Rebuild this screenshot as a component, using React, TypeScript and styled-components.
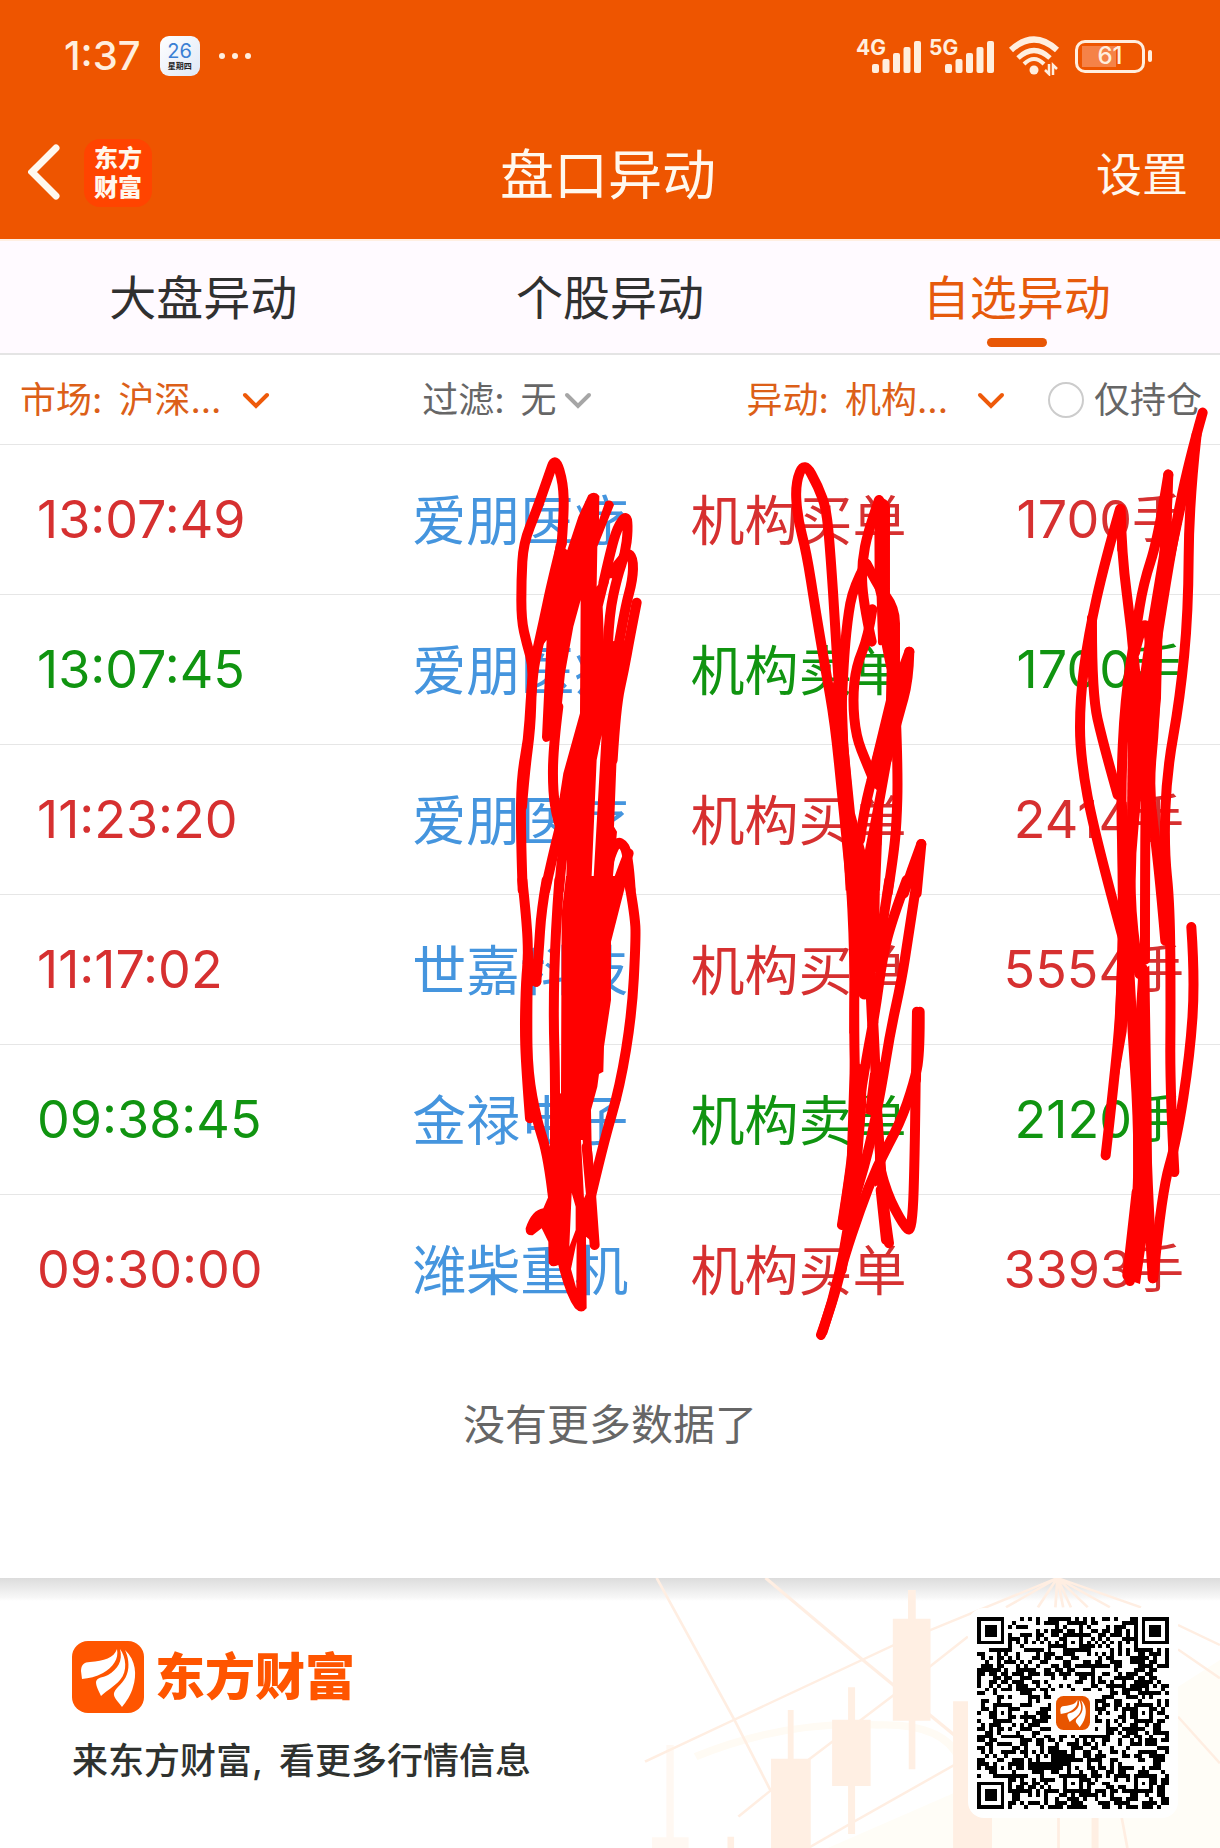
import React, { useState } from "react";
import styled, { createGlobalStyle } from "styled-components";

const GlobalStyle = createGlobalStyle`
  * { box-sizing: border-box; }
  body {
    margin: 0;
    background: #fff;
    font-family: Inter, "Noto Sans CJK SC", sans-serif;
    color: #303030;
  }
  button, select, input {
    font: inherit;
    color: inherit;
    margin: 0;
    padding: 0;
    border: 0;
    background: none;
  }
`;

const ORANGE = "#ee5500";
const CREAM = "#ffeede";

const Page = styled.div`
  position: relative;
  display: flex;
  flex-direction: column;
  min-height: 100vh;
`;

const Header = styled.header`
  background: ${ORANGE};
  color: #fff8ee;
`;

const StatusBar = styled.div`
  display: flex;
  align-items: center;
  justify-content: space-between;
  height: 112px;
  padding: 0 68px 0 64px;
  color: ${CREAM};
`;

const StatusGroup = styled.div<{ $gap: number }>`
  display: flex;
  align-items: center;
  gap: ${(p) => p.$gap}px;
`;

const Clock = styled.span`
  font-size: 40px;
  line-height: 48px;
  font-weight: 500;
`;

const Calendar = styled.span`
  display: flex;
  flex-direction: column;
  align-items: center;
  justify-content: center;
  width: 40px;
  height: 40px;
  border-radius: 9px;
  background: linear-gradient(135deg, #ffffff, #dfe8f6);
`;

const CalendarDay = styled.span`
  font-size: 20px;
  line-height: 20px;
  color: #3b7fd4;
`;

const CalendarWeek = styled.span`
  font-size: 8px;
  line-height: 10px;
  font-weight: 700;
  color: #222;
`;

const Signal = styled.span`
  display: flex;
  align-items: flex-start;
  height: 36px;
`;

const SignalLabel = styled.span`
  width: 16px;
  font-size: 21px;
  line-height: 20px;
  font-weight: 700;
  white-space: nowrap;
`;

const Battery = styled.span`
  display: flex;
  align-items: center;
  gap: 3px;
`;

const BatteryBody = styled.span`
  display: grid;
  place-items: center;
  width: 70px;
  height: 33px;
  border: 3px solid ${CREAM};
  border-radius: 10px;
  background: linear-gradient(90deg, #f58248 34px, transparent 34px) 4px 3px / 56px 21px no-repeat;
  font-size: 24px;
  line-height: 24px;
  font-weight: 500;
`;

const BatteryTip = styled.span`
  width: 4px;
  height: 12px;
  border-radius: 2px;
  background: ${CREAM};
`;

const NavBar = styled.div`
  display: grid;
  grid-template-columns: 1fr auto 1fr;
  align-items: center;
  height: 127px;
  padding: 0 32px 6px 28px;
`;

const NavStart = styled.div`
  display: flex;
  align-items: center;
  gap: 18px;
`;

const IconButton = styled.button`
  display: flex;
  cursor: pointer;
`;

const AppBadge = styled.a`
  display: grid;
  place-content: center;
  width: 68px;
  height: 68px;
  border-radius: 16px;
  background: #ff4400;
  color: #fff8ee;
  font-size: 24px;
  line-height: 29px;
  font-weight: 900;
  text-align: center;
  text-decoration: none;
`;

const Title = styled.h1`
  margin: 0;
  padding-top: 6px;
  font-size: 54px;
  line-height: 64px;
  font-weight: 400;
`;

const SettingsButton = styled.button`
  justify-self: end;
  padding-top: 3px;
  font-size: 46px;
  line-height: 64px;
  cursor: pointer;
`;

const Tabs = styled.nav`
  display: grid;
  grid-template-columns: repeat(3, 1fr);
  height: 116px;
  background: #fffaff;
  border-top: 2px solid #ffefe2;
  border-bottom: 2px solid #e4e4e4;
`;

const Tab = styled.button<{ $active: boolean }>`
  display: flex;
  flex-direction: column;
  align-items: center;
  justify-content: flex-end;
  gap: 10px;
  padding-bottom: 6px;
  font-size: 47px;
  line-height: 60px;
  color: ${(p) => (p.$active ? "#e65a0c" : "#303030")};
  cursor: pointer;
  &::after {
    content: "";
    width: 60px;
    height: 9px;
    border-radius: 5px;
    background: ${(p) => (p.$active ? "#e85706" : "transparent")};
  }
`;

const Filters = styled.form`
  display: grid;
  grid-template-columns: 403fr 325fr 302fr 152fr;
  align-items: center;
  height: 90px;
  padding: 0 18px 0 20px;
  border-bottom: 1px solid #e6e6e6;
  font-size: 36px;
  line-height: 44px;
  color: #666;
  white-space: nowrap;
`;

const FilterField = styled.label<{ $active?: boolean }>`
  display: flex;
  align-items: center;
  color: ${(p) => (p.$active ? "#dc5f18" : "#666")};
`;

const FilterSelect = styled.select`
  appearance: none;
  margin-left: 16px;
  height: 44px;
  outline: none;
  cursor: pointer;
`;

const Chevron = styled.svg<{ $gap: number }>`
  margin-left: ${(p) => p.$gap}px;
  flex: none;
`;

const HoldingOnly = styled.label`
  display: flex;
  align-items: center;
  gap: 10px;
`;

const RoundCheck = styled.input`
  appearance: none;
  flex: none;
  width: 36px;
  height: 36px;
  border: 2px solid #ccc;
  border-radius: 50%;
  &:checked {
    background: ${ORANGE};
  }
`;

const Table = styled.table`
  width: 100%;
  table-layout: fixed;
  border-spacing: 0;
  font-size: 54px;
  line-height: 64px;
  white-space: nowrap;
`;

const Row = styled.tr<{ $tone: "buy" | "sell" }>`
  height: 150px;
  color: ${(p) => (p.$tone === "buy" ? "#d63030" : "#109410")};
  &:not(:last-child) td {
    border-bottom: 1px solid #e6e6e6;
  }
`;

const Cell = styled.td<{ $color?: string }>`
  padding: 4px 0 0;
  color: ${(p) => p.$color ?? "inherit"};
`;

const NumberCell = styled.td<{ $end?: boolean }>`
  padding: ${(p) => (p.$end ? "0 36px 0 0" : "0 0 0 37px")};
  font-size: 52px;
  text-align: ${(p) => (p.$end ? "right" : "left")};
`;

const EndNote = styled.p`
  flex: 1;
  margin: 0;
  padding-top: 54px;
  font-size: 42px;
  line-height: 52px;
  text-align: center;
  color: #666;
`;

const Footer = styled.footer`
  position: relative;
  display: flex;
  justify-content: space-between;
  align-items: flex-start;
  height: 270px;
  padding: 30px 42px 30px 72px;
  background: linear-gradient(#dcdcdc, #f8f8f8 20px, #fff 23px);
`;

const FooterArt = styled.svg`
  position: absolute;
  right: 0;
  top: 0;
`;

const Brand = styled.div`
  padding-top: 33px;
`;

const BrandLine = styled.div`
  display: flex;
  align-items: center;
  gap: 11px;
  font-size: 50px;
  line-height: 72px;
  font-weight: 900;
  color: #ff5500;
`;

const Slogan = styled.p`
  display: flex;
  gap: 16px;
  margin: 24px 0 0;
  font-size: 36px;
  line-height: 48px;
  font-weight: 500;
  color: #2f322f;
`;

const QrCard = styled.div`
  position: relative;
  padding: 9px;
  border-radius: 16px;
  background: #fff;
  svg {
    display: block;
  }
`;

const Scribbles = styled.svg`
  position: absolute;
  left: 0;
  top: 0;
  width: 100%;
  pointer-events: none;
`;

type Pt = [number, number];

/* Rounds a freehand polyline by running quadratic curves through its midpoints. */
function smooth(points: Pt[]): string {
  let d = `M${points[0].join(" ")}`;
  for (let i = 1; i < points.length - 1; i++) {
    const [x, y] = points[i];
    const [nx, ny] = points[i + 1];
    const last = i === points.length - 2;
    d += `Q${x} ${y} ${last ? nx : (x + nx) / 2} ${last ? ny : (y + ny) / 2}`;
  }
  if (points.length === 2) d += `L${points[1].join(" ")}`;
  return d;
}

type Patch = { transform: string; lines: Pt[][]; fills: string[] };

const PATCHES: Patch[] = [
  {
    transform: "translate(480 440) scale(0.3333)",
    lines: [
      [[245, 310], [252, 220], [250, 130], [226, 50], [205, 110], [170, 210], [130, 310], [124, 420], [124, 540], [140, 610], [160, 680], [152, 780], [145, 900], [124, 1010], [122, 1180], [128, 1350]],
      [[245, 310], [215, 430], [190, 550], [165, 660], [155, 740], [152, 860], [134, 1000], [126, 1100]],
      [[235, 800], [220, 920], [218, 1050], [232, 1140], [250, 1190]],
      [[240, 1160], [215, 1260], [196, 1350]],
      [[255, 1190], [243, 1270], [237, 1350]],
      [[370, 430], [390, 340], [412, 262], [440, 224], [444, 270], [436, 340], [412, 410], [388, 520], [384, 610]],
      [[395, 400], [440, 335], [460, 355], [458, 420], [436, 500], [415, 620]],
      [[470, 488], [450, 590], [432, 690], [408, 800], [398, 960]],
      [[385, 1270], [400, 1220], [422, 1203], [445, 1240], [452, 1350]],
      [[405, 1350], [430, 1280], [446, 1240]],
    ],
    fills: [
      "M325 165Q345 150 358 168L357 240L376 185Q395 175 402 195L352 320L350 440L400 370L368 500L372 605L450 600L415 820L412 900L402 1160L411 1175L395 1350L258 1350L262 1200L222 1180L250 1000L300 820L302 480L280 560L255 700L240 850L212 900Q190 915 186 892L200 600L170 640L200 480L228 310L262 330L295 230ZM365 885L350 960L334 1330L340 1330Z",
    ],
  },
  {
    transform: "translate(480 880) scale(0.3333)",
    lines: [
      [[127, 0], [140, 120], [145, 230], [138, 300], [134, 440], [138, 560], [150, 715]],
      [[144, 220], [141, 420], [144, 580], [170, 720], [205, 830], [220, 960]],
      [[200, 0], [184, 90], [176, 220], [169, 305]],
      [[150, 250], [169, 305]],
      [[238, 0], [226, 160], [220, 400], [226, 600], [225, 800]],
      [[446, 0], [466, 110], [467, 190], [456, 400], [420, 620], [370, 790], [328, 970]],
      [[320, 800], [335, 950], [344, 1095]],
    ],
    fills: [
      "M258 -12L440 -12L435 20L393 185L393 360L372 500L370 575L357 582L352 620L333 690L335 800L345 900L345 960L330 1080L318 1070L320 1285Q305 1305 285 1285Q260 1250 240 1175L235 1155Q215 1165 206 1150L205 1085L185 1045L158 1066Q136 1068 137 1045Q155 990 190 985L205 950L200 900L210 820L212 650L243 640L245 100ZM303 780L308 780L319 940L312 955ZM275 938L287 980L287 1050L268 1100ZM290 1085L289 1225L273 1167Z",
      "M132 180L156 230L172 300L156 320L156 580L130 560Z",
    ],
  },
  {
    transform: "translate(760 440) scale(0.3333)",
    lines: [
      [[270, 1300], [250, 1100], [225, 850], [195, 680], [165, 500], [140, 340], [112, 230], [106, 130], [133, 64], [175, 140], [200, 210], [212, 350], [226, 560], [240, 800], [265, 1100]],
      [[357, 180], [325, 270], [305, 370], [308, 480], [335, 605]],
      [[318, 370], [280, 440], [262, 540], [250, 680], [245, 800]],
      [[320, 372], [350, 430], [390, 490], [405, 540], [405, 650]],
      [[337, 508], [325, 590], [288, 680], [278, 780], [288, 890], [320, 970], [345, 1030]],
      [[448, 635], [446, 720], [415, 830], [380, 960]],
      [[448, 635], [420, 710], [395, 800], [345, 980], [312, 1110], [300, 1200]],
      [[408, 840], [414, 1000], [410, 1150], [400, 1250], [383, 1360]],
      [[484, 1212], [455, 1290], [432, 1360]],
      [[484, 1212], [470, 1360]],
    ],
    fills: [
      "M343 180Q357 155 370 175Q392 185 390 205L390 460Q420 500 420 550L420 850L395 960L370 1100L360 1352L257 1352L240 1050L205 780L245 640L260 780L265 920L285 1120L315 1230L350 1050L320 1020L378 780L380 690L365 615Q352 620 354 600L350 470L344 445Z",
    ],
  },
  {
    transform: "translate(760 880) scale(0.3333)",
    lines: [
      [[388, 0], [366, 140], [348, 260]],
      [[440, 0], [396, 120], [368, 230], [345, 400], [318, 540], [296, 680]],
      [[471, 0], [445, 170], [425, 300], [390, 460], [365, 620], [325, 820], [270, 1000], [245, 1170]],
      [[272, 0], [284, 180], [282, 480], [288, 680], [276, 850], [246, 1035]],
      [[334, 320], [344, 500], [350, 680], [362, 850], [370, 970], [387, 1090]],
      [[467, 600], [465, 800], [457, 1060], [430, 1035], [380, 940], [362, 870]],
      [[479, 395], [480, 520], [462, 610], [420, 730], [350, 860], [300, 990], [250, 1140], [220, 1260], [183, 1365]],
      [[264, 1040], [240, 1200], [188, 1355]],
      [[471, 395], [468, 600]],
      [[362, 930], [378, 1080]],
    ],
    fills: [
      "M257 -12L360 -12L357 200L345 300L355 430L322 440L318 358Q300 360 296 345L297 480L268 460L272 200Z",
      "M270 540L320 560L318 680L305 850L280 1020L232 1040L260 850Z",
      "M330 580L368 540L365 700L378 900L345 920L345 710L315 700Z",
    ],
  },
  {
    transform: "translate(980 400) scale(0.3333 0.574)",
    lines: [
      [[420, 190], [375, 280], [325, 410], [300, 520], [300, 620], [345, 760], [430, 940]],
      [[422, 190], [425, 270], [455, 400], [475, 540], [472, 680], [450, 800], [455, 920], [478, 1000]],
      [[336, 380], [335, 510], [370, 600], [413, 688]],
      [[565, 130], [535, 240], [490, 320], [468, 400], [435, 520], [422, 680], [430, 850], [425, 1050], [400, 1200], [377, 1316]],
      [[668, 22], [625, 110], [580, 240], [535, 400], [505, 520], [495, 700], [495, 975]],
      [[650, 60], [627, 180], [625, 370], [600, 520], [560, 650], [552, 780], [570, 880], [572, 1050], [570, 1200], [583, 1345]],
      [[565, 130], [555, 280], [530, 400], [525, 560], [505, 680], [535, 800], [556, 942]],
      [[634, 918], [645, 1010], [630, 1140], [590, 1290], [545, 1380], [520, 1530]],
      [[440, 900], [455, 1080], [475, 1250], [475, 1400], [450, 1535]],
      [[488, 990], [495, 1150], [500, 1350], [518, 1530]],
      [[465, 440], [490, 376], [515, 420], [510, 520]],
      [[442, 1525], [470, 1380]],
    ],
    fills: [
      "M408 185L435 185L432 240L412 265Z",
      "M555 125L578 130L575 220L600 180L640 60L645 110L575 300L548 390L543 520L515 690L485 690L475 500L500 400L540 260Z",
      "M412 700L440 700L465 880L440 1100L395 1250L405 1080L415 920Z",
      "M475 1000L508 985L515 1250L515 1450L500 1460L480 1540L430 1530L460 1370L458 1150Z",
      "M445 480L462 500L462 700L440 800Z",
    ],
  },
];

function BrandMark({ size, color }: { size: number; color: string }) {
  return (
    <svg width={size} height={size} viewBox="0 0 72 72" aria-hidden="true">
      <rect width="72" height="72" rx="16" fill={color} />
      <g fill="#fff">
        <path d="M45 8C42 17 32 20 18 21C12 21 9 24 9 30L10 38C17 37 24 36 31 32C41 26 47 18 45 8Z" />
        <path d="M48 8C51 20 46 28 36 34C30 37 25 36 24 41C24 46 27 50 29 55C35 49 42 46 48 39C56 30 54 16 48 8Z" />
        <path d="M53 9C64 19 65 34 61 46C59 54 54 61 50 66C47 61 41 57 42 52C44 46 52 42 55 33C58 25 56 15 53 9Z" />
      </g>
    </svg>
  );
}

const QR_SIZE = 49;

/* Fills the code area with modules and lays finder, alignment and timing marks over them. */
function qrPath(): string {
  let seed = 20240926;
  const rnd = () => {
    seed = (seed + 0x6d2b79f5) | 0;
    let t = Math.imul(seed ^ (seed >>> 15), 1 | seed);
    t = (t + Math.imul(t ^ (t >>> 7), 61 | t)) ^ t;
    return ((t ^ (t >>> 14)) >>> 0) / 4294967296;
  };
  const ring = (r: number, c: number, cr: number, cc: number) =>
    Math.max(Math.abs(r - cr), Math.abs(c - cc));
  let d = "";
  for (let r = 0; r < QR_SIZE; r++) {
    for (let c = 0; c < QR_SIZE; c++) {
      let on = rnd() < 0.5;
      if (r === 6 || c === 6) on = (r + c) % 2 === 0;
      for (const cr of [6, 24, 42])
        for (const cc of [6, 24, 42]) {
          const k = ring(r, c, cr, cc);
          if (k <= 2) on = k !== 1;
        }
      for (const [cr, cc] of [[3, 3], [3, 45], [45, 3]]) {
        const k = ring(r, c, cr, cc);
        if (k <= 4) on = k === 3 || k <= 1;
      }
      if (ring(r, c, 24, 24) <= 5) on = false;
      if (on) d += `M${c} ${r}h1v1h-1z`;
    }
  }
  return d;
}

function QrCode() {
  return (
    <QrCard>
      <svg width="192" height="192" viewBox="0 0 192 192" role="img" aria-label="二维码">
        <path d={qrPath()} transform="scale(3.918)" shapeRendering="crispEdges" />
        <g transform="translate(79 79)">
          <BrandMark size={34} color="#e85500" />
        </g>
      </svg>
    </QrCard>
  );
}

function SignalBars() {
  return (
    <svg width="50" height="36" viewBox="0 0 50 36" fill={CREAM} aria-hidden="true">
      {[9, 14, 20, 26, 32].map((h, i) => (
        <rect key={h} x={i * 10.5} y={35 - h} width="7" height={h} rx="2" />
      ))}
    </svg>
  );
}

function Wifi() {
  return (
    <svg width="52" height="40" viewBox="0 0 52 40" fill="none" stroke={CREAM} strokeWidth="6" aria-hidden="true">
      <path d="M2 14Q25 -7 48 14" />
      <path d="M9 22Q25 7 41 22" strokeWidth="5" />
      <path d="M15 28Q25 18 35 28" strokeWidth="4" />
      <circle cx="25" cy="34" r="4.5" fill={CREAM} stroke="none" />
      <path d="M36 34L40 38V28M48 33L44 29V39" strokeWidth="2.5" />
    </svg>
  );
}

function Down({ gap, color }: { gap: number; color: string }) {
  return (
    <Chevron $gap={gap} width="28" height="18" viewBox="0 0 28 18" aria-hidden="true">
      <path d="M3 4L14 15L25 4" fill="none" stroke={color} strokeWidth="4" strokeLinecap="round" />
    </Chevron>
  );
}

const TABS = ["大盘异动", "个股异动", "自选异动"];

const RECORDS = [
  { time: "13:07:49", name: "爱朋医疗", type: "机构买单", amount: "1700手", tone: "buy" },
  { time: "13:07:45", name: "爱朋医疗", type: "机构卖单", amount: "1700手", tone: "sell" },
  { time: "11:23:20", name: "爱朋医疗", type: "机构买单", amount: "2414手", tone: "buy" },
  { time: "11:17:02", name: "世嘉科技", type: "机构买单", amount: "5554手", tone: "buy" },
  { time: "09:38:45", name: "金禄电子", type: "机构卖单", amount: "2120手", tone: "sell" },
  { time: "09:30:00", name: "潍柴重机", type: "机构买单", amount: "3393手", tone: "buy" },
] as const;

export default function App() {
  const [tab, setTab] = useState(2);
  return (
    <Page>
      <GlobalStyle />
      <Header>
        <StatusBar>
          <StatusGroup $gap={19}>
            <Clock>1:37</Clock>
            <Calendar>
              <CalendarDay>26</CalendarDay>
              <CalendarWeek>星期四</CalendarWeek>
            </Calendar>
            <svg width="34" height="8" viewBox="0 0 34 8" fill={CREAM} aria-hidden="true">
              <circle cx="3" cy="4" r="3" />
              <circle cx="16" cy="4" r="3" />
              <circle cx="29" cy="4" r="3" />
            </svg>
          </StatusGroup>
          <StatusGroup $gap={14}>
            <StatusGroup $gap={7}>
              <Signal>
                <SignalLabel>4G</SignalLabel>
                <SignalBars />
              </Signal>
              <Signal>
                <SignalLabel>5G</SignalLabel>
                <SignalBars />
              </Signal>
            </StatusGroup>
            <Wifi />
            <Battery>
              <BatteryBody>61</BatteryBody>
              <BatteryTip />
            </Battery>
          </StatusGroup>
        </StatusBar>
        <NavBar>
          <NavStart>
            <IconButton type="button" aria-label="返回">
              <svg width="38" height="58" viewBox="0 0 38 58" aria-hidden="true">
                <path d="M28 4L4 28L28 52" fill="none" stroke="#fff8ee" strokeWidth="7" strokeLinecap="round" />
              </svg>
            </IconButton>
            <AppBadge href="#home">
              东方
              <br />
              财富
            </AppBadge>
          </NavStart>
          <Title>盘口异动</Title>
          <SettingsButton type="button">设置</SettingsButton>
        </NavBar>
      </Header>

      <Tabs>
        {TABS.map((label, i) => (
          <Tab key={label} type="button" $active={i === tab} onClick={() => setTab(i)}>
            {label}
          </Tab>
        ))}
      </Tabs>

      <Filters>
        <FilterField $active>
          市场:
          <FilterSelect>
            <option>沪深...</option>
          </FilterSelect>
          <Down gap={20} color="#ee5a0a" />
        </FilterField>
        <FilterField>
          过滤:
          <FilterSelect>
            <option>无</option>
          </FilterSelect>
          <Down gap={6} color="#a6a6a6" />
        </FilterField>
        <FilterField $active>
          异动:
          <FilterSelect>
            <option>机构...</option>
          </FilterSelect>
          <Down gap={28} color="#ee5a0a" />
        </FilterField>
        <HoldingOnly>
          <RoundCheck type="checkbox" />
          仅持仓
        </HoldingOnly>
      </Filters>

      <Table>
        <colgroup>
          <col width="33.8%" />
          <col width="22.8%" />
          <col width="22.4%" />
          <col />
        </colgroup>
        <tbody>
          {RECORDS.map((r) => (
            <Row key={r.time} $tone={r.tone}>
              <NumberCell>{r.time}</NumberCell>
              <Cell $color="#4595de">{r.name}</Cell>
              <Cell>{r.type}</Cell>
              <NumberCell $end>{r.amount}</NumberCell>
            </Row>
          ))}
        </tbody>
      </Table>
      <EndNote>没有更多数据了</EndNote>

      <Footer>
        <FooterArt width="610" height="270" viewBox="0 0 610 270" aria-hidden="true">
          <g transform="translate(0 -18) scale(0.389 0.3333)">
            <path d="M1568 300L1300 500L1000 640L560 864H1568Z" fill="#fffdf7" />
            <path d="M220 590Q450 480 690 495Q860 490 900 600" fill="none" stroke="#fffbf4" strokeWidth="22" />
            <g fill="none" stroke="#ffeee2" strokeWidth="7">
              <path d="M90 605L300 490L730 255L1150 54" />
              <path d="M120 54L320 480L412 690" />
              <path d="M400 54L650 300L890 530" strokeWidth="9" />
              <path d="M330 770L510 600L730 405L920 230" />
              <path d="M510 864L620 790L885 615" />
              <path d="M1150 54L1018 142M1150 54L1100 142M1150 54L1145 142M1150 54L1165 142M1150 54L1185 142M1150 54L1228 142M1150 54L1285 142M1150 54L1365 142M1460 195L1568 255M1460 268L1568 355M1460 470L1568 610M1153 770V864M1315 770L1330 864" />
            </g>
            <g fill="#ffefe3">
              <path d="M766 90H786V176H824V482H785V628H768V482H727V176H766Z" />
              <path d="M612 382H630V479H670V678H630V822H612V678H571V479H612Z" />
              <path d="M457 450H472V596H516V864H414V596H457Z" />
              <path d="M882 424H982V864H882Z" />
              <path d="M1238 770H1256V864H1238ZM302 830H319V864H302Z" />
              <path d="M145 555H164V832H202V864H108V832H145Z" opacity="0.45" />
            </g>
          </g>
        </FooterArt>
        <Brand>
          <BrandLine>
            <BrandMark size={72} color="#ff5500" />
            <span>东方财富</span>
          </BrandLine>
          <Slogan>
            <span>来东方财富,</span>
            <span>看更多行情信息</span>
          </Slogan>
        </Brand>
        <QrCode />
      </Footer>

      <Scribbles viewBox="0 0 1220 1848" aria-hidden="true">
        {PATCHES.map((patch) => (
          <g key={patch.transform} transform={patch.transform}>
            {patch.fills.map((d) => (
              <path key={d} d={d} fill="#ff0000" fillRule="evenodd" />
            ))}
            {patch.lines.map((pts, i) => (
              <path
                key={i}
                d={smooth(pts)}
                fill="none"
                stroke="#ff0000"
                strokeWidth="10"
                strokeLinecap="round"
                strokeLinejoin="round"
                vectorEffect="non-scaling-stroke"
              />
            ))}
          </g>
        ))}
      </Scribbles>
    </Page>
  );
}
